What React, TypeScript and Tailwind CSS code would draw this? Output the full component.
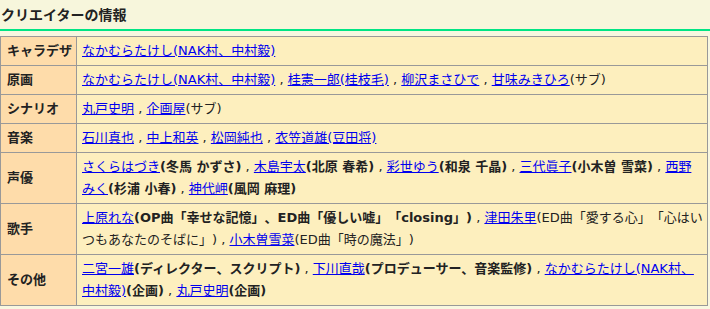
import React from "react";

type Part = { t: string; href?: boolean; b?: boolean };

const L = (t: string): Part => ({ t, href: true });
const B = (t: string): Part => ({ t, b: true });
const T = (t: string): Part => ({ t });
const SEP = T(" , ");

const rows: { label: string; parts: Part[] }[] = [
  { label: "キャラデザ", parts: [L("なかむらたけし(NAK村、中村毅)")] },
  {
    label: "原画",
    parts: [
      L("なかむらたけし(NAK村、中村毅)"),
      SEP,
      L("桂憲一郎(桂枝毛)"),
      SEP,
      L("柳沢まさひで"),
      SEP,
      L("甘味みきひろ"),
      T("(サブ)"),
    ],
  },
  { label: "シナリオ", parts: [L("丸戸史明"), SEP, L("企画屋"), T("(サブ)")] },
  {
    label: "音楽",
    parts: [
      L("石川真也"),
      SEP,
      L("中上和英"),
      SEP,
      L("松岡純也"),
      SEP,
      L("衣笠道雄(豆田将)"),
    ],
  },
  {
    label: "声優",
    parts: [
      L("さくらはづき"),
      B("(冬馬 かずさ)"),
      SEP,
      L("木島宇太"),
      B("(北原 春希)"),
      SEP,
      L("彩世ゆう"),
      B("(和泉 千晶)"),
      SEP,
      L("三代眞子"),
      B("(小木曽 雪菜)"),
      SEP,
      L("西野みく"),
      B("(杉浦 小春)"),
      SEP,
      L("神代岬"),
      B("(風岡 麻理)"),
    ],
  },
  {
    label: "歌手",
    parts: [
      L("上原れな"),
      B("(OP曲「幸せな記憶」、ED曲「優しい嘘」「closing」)"),
      SEP,
      L("津田朱里"),
      T("(ED曲「愛する心」「心はいつもあなたのそばに」)"),
      SEP,
      L("小木曽雪菜"),
      T("(ED曲「時の魔法」)"),
    ],
  },
  {
    label: "その他",
    parts: [
      L("二宮一雄"),
      B("(ディレクター、スクリプト)"),
      SEP,
      L("下川直哉"),
      B("(プロデューサー、音楽監修)"),
      SEP,
      L("なかむらたけし(NAK村、中村毅)"),
      B("(企画)"),
      SEP,
      L("丸戸史明"),
      B("(企画)"),
    ],
  },
];

export default function App() {
  return (
    <div
      className="w-[710px] h-[309px] overflow-hidden bg-[#f8f7e0] text-[#222] [text-spacing-trim:space-all]"
      style={{ fontFamily: '"DejaVu Sans", "Noto Sans CJK JP", sans-serif' }}
    >
      <div className="h-[31px] bg-[#f7f6dc] border-b-2 border-[#00e584] flex items-center">
        <h2 className="text-[14px] font-bold leading-none pl-px">クリエイターの情報</h2>
      </div>

      <table className="mt-[5px] w-[708px] border-collapse border border-[#999] text-[13px] leading-[22px]">
        <tbody>
          {rows.map((row) => (
            <tr key={row.label}>
              <th className="w-[76px] border border-[#999] bg-[#fedcaa] pl-[6px] pr-0 py-[3px] text-left font-bold whitespace-nowrap">
                {row.label}
              </th>
              <td className="border border-[#999] bg-[#fdefbe] pl-[5px] pr-[4px] py-[3px]">
                {row.parts.map((p, i) =>
                  p.href ? (
                    <a key={i} href="#" className="text-[#0000ee] underline">
                      {p.t}
                    </a>
                  ) : (
                    <span key={i} className={p.b ? "font-bold" : ""}>
                      {p.t}
                    </span>
                  ),
                )}
              </td>
            </tr>
          ))}
        </tbody>
      </table>
    </div>
  );
}
